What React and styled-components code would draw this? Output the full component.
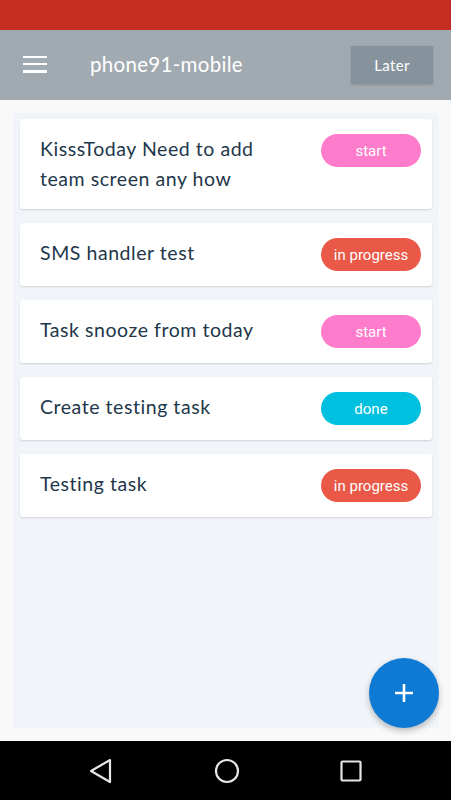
import React from "react";
import styled, { createGlobalStyle } from "styled-components";

const Global = createGlobalStyle`
  html, body { margin: 0; padding: 0; background: #f9f9f9; }
  * { box-sizing: border-box; }
`;

const Screen = styled.div`
  position: relative;
  width: 451px;
  height: 800px;
  display: flex;
  flex-direction: column;
  background: #f9f9f9;
  font-family: Lato, "Open Sans", sans-serif;
  overflow: hidden;
`;

const StatusBar = styled.div`
  height: 30px;
  flex: none;
  background: #c62d22;
`;

const AppBar = styled.header`
  height: 70px;
  flex: none;
  background: #a2aab1;
  display: flex;
  align-items: center;
  padding: 0 18px 0 23px;
`;

const MenuButton = styled.div`
  width: 24px;
  height: 17px;
  display: flex;
  flex-direction: column;
  justify-content: space-between;
  margin-right: 43px;
  margin-top: -2px;
`;

const MenuLine = styled.span`
  display: block;
  height: 2.5px;
  background: #ffffff;
`;

const Title = styled.h1`
  margin: 0 0 3px;
  flex: 1;
  color: #ffffff;
  font-family: Lato, sans-serif;
  font-weight: 400;
  font-size: 20.5px;
  letter-spacing: 0.3px;
`;

const LaterButton = styled.button`
  width: 82px;
  height: 38px;
  border: none;
  background: #87939c;
  color: #ffffff;
  font-family: Lato, sans-serif;
  font-size: 15px;
  letter-spacing: 0.3px;
  box-shadow: 0 1px 2px rgba(0, 0, 0, 0.15);
`;

const Main = styled.main`
  flex: 1;
  padding: 13px 12px 13px 13px;
  display: flex;
`;

const Panel = styled.div`
  flex: 1;
  background: #f1f4f8;
  padding: 6px 7px;
  display: flex;
  flex-direction: column;
  gap: 14px;
`;

const Card = styled.div`
  background: #ffffff;
  border-radius: 3px;
  box-shadow: 0 1px 2px rgba(0, 0, 0, 0.14);
  display: flex;
  align-items: flex-start;
  padding: 15px 11px 15px 20px;
`;

const TaskText = styled.div`
  flex: 1;
  font-family: Lato, sans-serif;
  font-size: 19.5px;
  line-height: 30px;
  letter-spacing: 0.55px;
  color: #22374a;
  padding-right: 20px;
`;

const badgeColors = {
  start: "#ff7bcb",
  "in progress": "#ea5848",
  done: "#00c0e0",
};

const Badge = styled.span`
  flex: none;
  width: 100px;
  height: 33px;
  border-radius: 17px;
  background: ${(p) => badgeColors[p.$status]};
  color: #ffffff;
  font-family: Roboto, sans-serif;
  font-size: 15px;
  display: flex;
  align-items: center;
  justify-content: center;
`;

const Fab = styled.button`
  position: absolute;
  left: 369px;
  top: 658px;
  width: 70px;
  height: 70px;
  border-radius: 50%;
  border: none;
  background: #0e7ad3;
  box-shadow: 0 3px 6px rgba(0, 0, 0, 0.25);
  display: flex;
  align-items: center;
  justify-content: center;
  padding: 0;
`;

const NavBar = styled.nav`
  height: 59px;
  flex: none;
  background: #000000;
  display: flex;
  align-items: center;
  justify-content: space-between;
  padding: 0 89px 0 89px;
`;

const tasks = [
  { text: "KisssToday Need to add team screen any how", status: "start" },
  { text: "SMS handler test", status: "in progress" },
  { text: "Task snooze from today", status: "start" },
  { text: "Create testing task", status: "done" },
  { text: "Testing task", status: "in progress" },
];

export default function App() {
  return (
    <Screen>
      <Global />
      <StatusBar />
      <AppBar>
        <MenuButton>
          <MenuLine />
          <MenuLine />
          <MenuLine />
        </MenuButton>
        <Title>phone91-mobile</Title>
        <LaterButton>Later</LaterButton>
      </AppBar>
      <Main>
        <Panel>
          {tasks.map((t, i) => (
            <Card key={i}>
              <TaskText>{t.text}</TaskText>
              <Badge $status={t.status}>{t.status}</Badge>
            </Card>
          ))}
        </Panel>
      </Main>
      <Fab>
        <svg width="20" height="20" viewBox="0 0 20 20">
          <path d="M10 1v18M1 10h18" stroke="#fff" strokeWidth="2.6" />
        </svg>
      </Fab>
      <NavBar>
        <svg width="24" height="26" viewBox="0 0 24 26">
          <path d="M21 2 L2 13 L21 24 Z" fill="none" stroke="#e6e6e6" strokeWidth="2.2" strokeLinejoin="round" />
        </svg>
        <svg width="26" height="26" viewBox="0 0 26 26">
          <circle cx="13" cy="13" r="11" fill="none" stroke="#e6e6e6" strokeWidth="2.2" />
        </svg>
        <svg width="22" height="22" viewBox="0 0 22 22">
          <rect x="1.5" y="1.5" width="19" height="19" rx="1" fill="none" stroke="#e6e6e6" strokeWidth="2.2" />
        </svg>
      </NavBar>
    </Screen>
  );
}
